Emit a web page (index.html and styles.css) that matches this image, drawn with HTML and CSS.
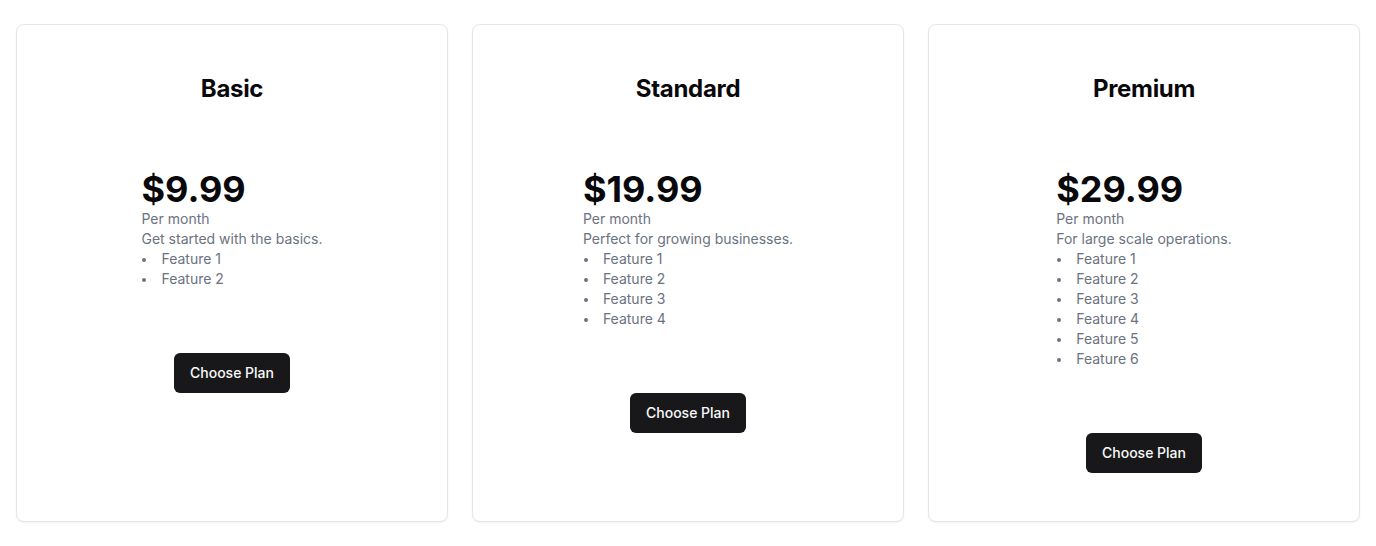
FILE: index.html
```html
<!DOCTYPE html>
<html lang="en">
<head>
<meta charset="utf-8">
<title>Pricing</title>
<link rel="stylesheet" href="styles.css">
</head>
<body>
<main class="pricing">
  <section class="card">
    <h2 class="card-title">Basic</h2>
    <div class="card-body">
      <div class="price">$9.99</div>
      <p class="muted">Per month</p>
      <p class="muted">Get started with the basics.</p>
      <ul class="features">
        <li>Feature 1</li>
        <li>Feature 2</li>
      </ul>
    </div>
    <button class="btn">Choose Plan</button>
  </section>
  <section class="card">
    <h2 class="card-title">Standard</h2>
    <div class="card-body">
      <div class="price">$19.99</div>
      <p class="muted">Per month</p>
      <p class="muted">Perfect for growing businesses.</p>
      <ul class="features">
        <li>Feature 1</li>
        <li>Feature 2</li>
        <li>Feature 3</li>
        <li>Feature 4</li>
      </ul>
    </div>
    <button class="btn">Choose Plan</button>
  </section>
  <section class="card">
    <h2 class="card-title">Premium</h2>
    <div class="card-body">
      <div class="price">$29.99</div>
      <p class="muted">Per month</p>
      <p class="muted">For large scale operations.</p>
      <ul class="features">
        <li>Feature 1</li>
        <li>Feature 2</li>
        <li>Feature 3</li>
        <li>Feature 4</li>
        <li>Feature 5</li>
        <li>Feature 6</li>
      </ul>
    </div>
    <button class="btn">Choose Plan</button>
  </section>
</main>
</body>
</html>
```

FILE: styles.css
```css
* {
  box-sizing: border-box;
}

html, body {
  margin: 0;
  padding: 0;
  background: #ffffff;
}

body {
  font-family: Inter, "Noto Sans", "Liberation Sans", sans-serif;
  color: #09090b;
}

.pricing {
  display: grid;
  grid-template-columns: repeat(3, 1fr);
  gap: 24px;
  padding: 24px 16px;
}

.card {
  display: flex;
  flex-direction: column;
  align-items: center;
  border: 1px solid #e4e4e7;
  border-radius: 8px;
  background: #fff;
  box-shadow: 0 1px 2px rgba(0, 0, 0, 0.05);
  padding: 49px 24px 48px;
}

.card-title {
  margin: 0;
  font-size: 24px;
  line-height: 30px;
  font-weight: 700;
  letter-spacing: -0.3px;
  text-align: center;
}

.card-body {
  margin-top: 65px;
  width: fit-content;
  text-align: left;
}

.price {
  font-size: 36px;
  line-height: 40px;
  font-weight: 700;
}

.muted {
  margin: 0;
  font-size: 14px;
  line-height: 20px;
  color: #6b7280;
}

.features {
  list-style: none;
  margin: 0;
  padding: 0;
  font-size: 14px;
  line-height: 20px;
  color: #6b7280;
}

.features li::before {
  content: "";
  display: inline-block;
  width: 4px;
  height: 4px;
  border-radius: 50%;
  background: currentColor;
  margin: 0 15px 0 1px;
  vertical-align: middle;
}

.btn {
  margin-top: 64px;
  height: 40px;
  padding: 0 16px;
  border: none;
  border-radius: 6px;
  background: #18181b;
  color: #fafafa;
  font-family: inherit;
  font-size: 14px;
  font-weight: 500;
  line-height: 20px;
  cursor: pointer;
}
```
